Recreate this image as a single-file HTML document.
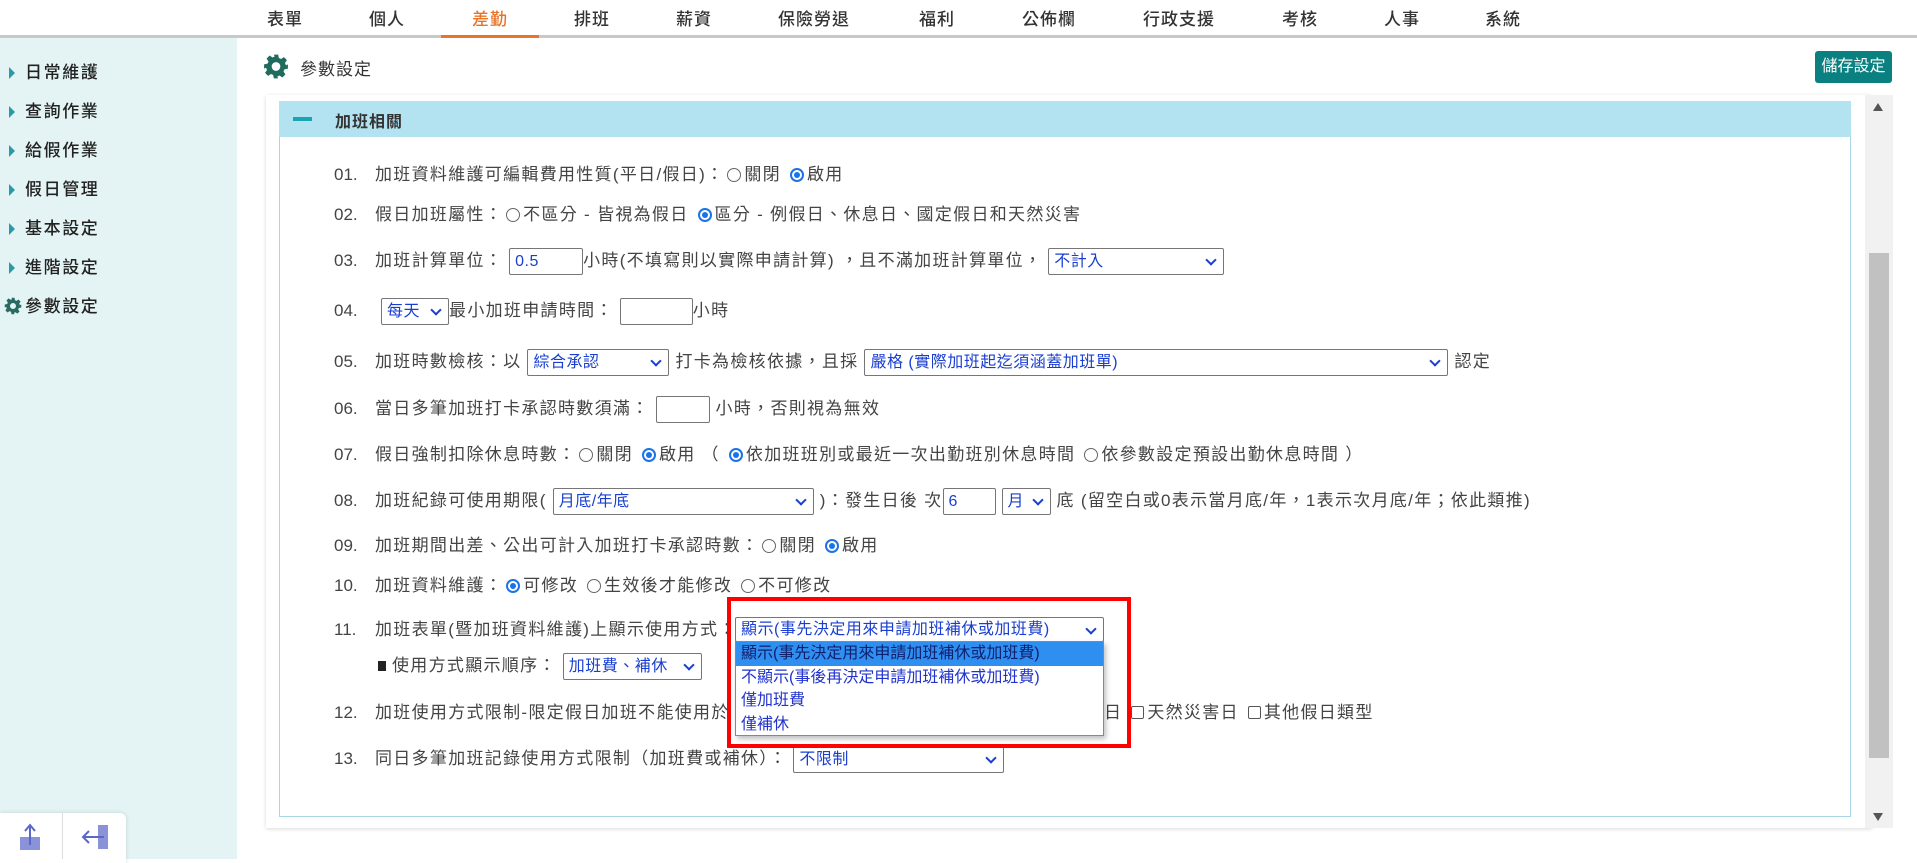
<!DOCTYPE html>
<html><head><meta charset="utf-8">
<style>
*{box-sizing:border-box;margin:0;padding:0}
body{width:1917px;height:859px;overflow:hidden;background:#fff;font-family:"Liberation Sans","Noto Sans CJK TC",sans-serif;color:#444;position:relative}
.nav{position:absolute;left:0;top:0;width:1917px;height:38px;border-bottom:3px solid #c8c8c8}
.nav span{position:absolute;top:5px;font-size:17px;color:#333;letter-spacing:1px;transform:translateX(-50%);font-weight:500}
.nav .act{color:#e8742a}
.uline{position:absolute;left:441px;top:35px;width:98px;height:3px;background:#e8742a}
.side{position:absolute;left:0;top:38px;width:237px;height:821px;background:#e4f4f4}
.side div{position:absolute;left:25px;font-size:17px;letter-spacing:1.6px;color:#222;font-weight:500;line-height:22px}
.side div:before{content:"";position:absolute;left:-16px;top:5px;border-left:6px solid #2a9aa8;border-top:6px solid transparent;border-bottom:6px solid transparent}
.side div.gear:before{display:none}
.bbox{position:absolute;left:0;top:813px;width:126px;height:50px;background:#fff;border-radius:0 6px 0 0;box-shadow:0 0 4px rgba(0,0,0,.15)}
.card{position:absolute;left:266px;top:95px;width:1606px;height:733px;background:#fff;box-shadow:0 1px 4px rgba(0,0,0,.15)}
.box{position:absolute;left:279px;top:101px;width:1572px;height:716px;border:1px solid #aad6e6;border-top:none}
.band{position:absolute;left:279px;top:101px;width:1572px;height:36px;background:#b3e2f0}
.row{position:absolute;left:334px;font-size:17px;letter-spacing:1.3px;line-height:24px;white-space:nowrap;color:#444}
.num{display:inline-block;width:41px;letter-spacing:0}
.r{display:inline-block;width:14px;height:14px;border:1px solid #666;border-radius:50%;vertical-align:-2px;margin:0 3px 0 3px;position:relative}
.r.on{border:2px solid #1a73e8}
.r.on:after{content:"";position:absolute;left:2px;top:2px;width:6px;height:6px;border-radius:50%;background:#1a73e8}
.c{display:inline-block;width:13px;height:13px;border:1px solid #555;border-radius:2px;vertical-align:-1px;margin:0 3px}
.sel,.inp{display:inline-block;height:27px;border:1px solid #767676;border-radius:2px;vertical-align:middle;color:#1a3fd0;font-size:16px;line-height:25px;padding-left:5px;position:relative;overflow:hidden;letter-spacing:0.5px}
.sel:after{content:"";position:absolute;right:8px;top:7px;width:6px;height:6px;border-right:2px solid #1a3fd0;border-bottom:2px solid #1a3fd0;transform:rotate(45deg)}
.dd{position:absolute;left:735px;top:641px;width:369px;height:95px;background:#fff;border:1px solid #888;box-shadow:2px 3px 5px rgba(0,0,0,.25);font-size:16px;z-index:5}
.dd div{height:23.5px;line-height:23.5px;padding-left:5px;color:#2233cc;white-space:nowrap}
.dd div.h{background:#2f8ff0;color:#102070}
.red{position:absolute;left:727px;top:597px;width:404px;height:151px;border:4px solid #f00;z-index:6}
</style></head><body>
<div class="nav">
<span style="left:285px">表單</span><span style="left:387px">個人</span><span class="act" style="left:490px">差勤</span><span style="left:592px">排班</span><span style="left:694px">薪資</span><span style="left:814px">保險勞退</span><span style="left:937px">福利</span><span style="left:1049px">公佈欄</span><span style="left:1179px">行政支援</span><span style="left:1300px">考核</span><span style="left:1402px">人事</span><span style="left:1503px">系統</span>
</div>
<div class="uline"></div>
<div class="side">
<div style="top:24px">日常維護</div><div style="top:63px">查詢作業</div><div style="top:102px">給假作業</div><div style="top:141px">假日管理</div><div style="top:180px">基本設定</div><div style="top:219px">進階設定</div>
<div class="gear" style="top:258px">參數設定</div>
</div>
<svg style="position:absolute;left:4px;top:297px" width="18" height="18" viewBox="0 0 24 24"><path fill="#2a6a60" d="M10 1h4l.6 3.2 2 .9 2.7-1.8 2.8 2.8-1.8 2.7.9 2L23 10v4l-3.2.6-.9 2 1.8 2.7-2.8 2.8-2.7-1.8-2 .9L14 23h-4l-.6-3.2-2-.9-2.7 1.8-2.8-2.8 1.8-2.7-.9-2L1 14v-4l3.2-.6.9-2L3.3 4.7l2.8-2.8 2.7 1.8 2-.9zM12 8a4 4 0 100 8 4 4 0 100-8z"/></svg>
<div class="bbox">
<div style="position:absolute;left:62px;top:0;width:1px;height:46px;background:#ddd"></div>
<svg style="position:absolute;left:17px;top:10px" width="26" height="28"><rect x="3" y="14" width="20" height="13" fill="#8a93d8"/><path d="M13 2v20M8 8l5-6 5 6" stroke="#5a66c8" stroke-width="2" fill="none"/></svg>
<svg style="position:absolute;left:80px;top:10px" width="30" height="28"><rect x="18" y="2" width="10" height="24" fill="#8a93d8"/><path d="M24 14H3M9 8l-6 6 6 6" stroke="#5a66c8" stroke-width="2" fill="none"/></svg>
</div>
<svg style="position:absolute;left:263px;top:53px" width="26" height="27" viewBox="0 0 24 24"><path fill="#1f6b5e" d="M10 1h4l.6 3.2 2 .9 2.7-1.8 2.8 2.8-1.8 2.7.9 2L23 10v4l-3.2.6-.9 2 1.8 2.7-2.8 2.8-2.7-1.8-2 .9L14 23h-4l-.6-3.2-2-.9-2.7 1.8-2.8-2.8 1.8-2.7-.9-2L1 14v-4l3.2-.6.9-2L3.3 4.7l2.8-2.8 2.7 1.8 2-.9zM12 8a4 4 0 100 8 4 4 0 100-8z"/></svg>
<div style="position:absolute;left:300px;top:55px;font-size:17px;letter-spacing:1px;color:#333">參數設定</div>
<div style="position:absolute;left:1815px;top:51px;width:77px;height:32px;background:#0a8080;border-radius:3px;color:#fff;font-size:16px;line-height:32px;text-align:center">儲存設定</div>
<div class="card"></div>
<div class="box"></div>
<div class="band"></div>
<div style="position:absolute;left:293px;top:117px;width:19px;height:4px;background:#1aa3b0"></div>
<div style="position:absolute;left:335px;top:108px;font-size:16px;font-weight:bold;color:#333;letter-spacing:1px">加班相關</div>
<div style="position:absolute;left:1865px;top:95px;width:28px;height:733px;background:#f1f1f1"></div>
<div style="position:absolute;left:1869px;top:253px;width:20px;height:505px;background:#c1c1c1"></div>
<div style="position:absolute;left:1873px;top:103px;border-bottom:8px solid #555;border-left:5px solid transparent;border-right:5px solid transparent"></div>
<div style="position:absolute;left:1873px;top:813px;border-top:8px solid #555;border-left:5px solid transparent;border-right:5px solid transparent"></div>

<div class="row" style="top:163px"><span class="num">01.</span>加班資料維護可編輯費用性質(平日/假日)：<span class="r"></span>關閉 <span class="r on"></span>啟用</div>
<div class="row" style="top:203px"><span class="num">02.</span>假日加班屬性：<span class="r"></span>不區分 - 皆視為假日 <span class="r on"></span>區分 - 例假日、休息日、國定假日和天然災害</div>
<div class="row" style="top:248px"><span class="num">03.</span>加班計算單位： <span class="inp" style="width:74px">0.5</span>小時(不填寫則以實際申請計算) ，且不滿加班計算單位， <span class="sel" style="width:176px">不計入</span></div>
<div class="row" style="top:298px"><span class="num">04.</span> <span class="sel" style="width:68px">每天</span>最小加班申請時間： <span class="inp" style="width:73px"></span>小時</div>
<div class="row" style="top:349px"><span class="num">05.</span>加班時數檢核：以 <span class="sel" style="width:142px">綜合承認</span> 打卡為檢核依據，且採 <span class="sel" style="width:584px">嚴格 (實際加班起迄須涵蓋加班單)</span> 認定</div>
<div class="row" style="top:396px"><span class="num">06.</span>當日多筆加班打卡承認時數須滿： <span class="inp" style="width:54px"></span> 小時，否則視為無效</div>
<div class="row" style="top:443px"><span class="num">07.</span>假日強制扣除休息時數：<span class="r"></span>關閉 <span class="r on"></span>啟用 （ <span class="r on"></span>依加班班別或最近一次出勤班別休息時間 <span class="r"></span>依參數設定預設出勤休息時間 ）</div>
<div class="row" style="top:488px"><span class="num">08.</span>加班紀錄可使用期限( <span class="sel" style="width:261px">月底/年底</span> )：發生日後 次<span class="inp" style="width:53px">6</span> <span class="sel" style="width:49px">月</span> 底 (留空白或0表示當月底/年，1表示次月底/年；依此類推)</div>
<div class="row" style="top:534px"><span class="num">09.</span>加班期間出差、公出可計入加班打卡承認時數：<span class="r"></span>關閉 <span class="r on"></span>啟用</div>
<div class="row" style="top:574px"><span class="num">10.</span>加班資料維護：<span class="r on"></span>可修改 <span class="r"></span>生效後才能修改 <span class="r"></span>不可修改</div>
<div class="row" style="top:618px"><span class="num">11.</span>加班表單(暨加班資料維護)上顯示使用方式： </div>
<div class="sel" style="position:absolute;left:735px;top:617px;width:369px;height:25px;line-height:23px">顯示(事先決定用來申請加班補休或加班費)</div>
<div class="row" style="top:653px;left:378px"><span style="display:inline-block;width:8px;height:10px;background:#222;margin-right:6px"></span>使用方式顯示順序： <span class="sel" style="width:139px">加班費、補休</span></div>
<div class="row" style="top:701px"><span class="num">12.</span>加班使用方式限制-限定假日加班不能使用於：<span class="c"></span>例假日 <span class="c"></span>休息日</div>
<div class="row" style="top:701px;left:1104px">日 <span class="c"></span>天然災害日 <span class="c"></span>其他假日類型</div>
<div class="row" style="top:746px"><span class="num">13.</span>同日多筆加班記錄使用方式限制（加班費或補休）： <span class="sel" style="width:211px">不限制</span></div>
<div class="dd"><div class="h">顯示(事先決定用來申請加班補休或加班費)</div><div>不顯示(事後再決定申請加班補休或加班費)</div><div>僅加班費</div><div>僅補休</div></div>
<div class="red"></div>
</body></html>
